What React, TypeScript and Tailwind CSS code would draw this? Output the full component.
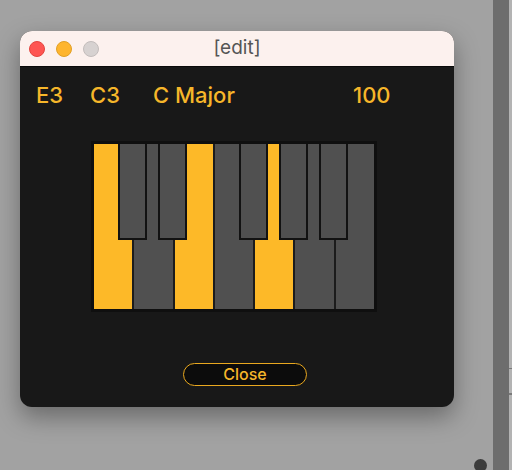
const YELLOW = 'bg-[#fdb928]';

const whiteKeys = [true, false, true, false, true, false, false];
const blackKeyLefts = [24, 64, 145, 185, 225];

function Keyboard() {
  return (
    <div className="relative w-[286px] h-[171px] border-[3px] border-[#0f0f0f] bg-[#1c1c1c]">
      <div className="flex h-full gap-[2px]">
        {whiteKeys.map((on, i) => (
          <div key={i} className={on ? `flex-1 ${YELLOW}` : 'flex-1 bg-[#505050]'} />
        ))}
      </div>
      {blackKeyLefts.map((left) => (
        <div
          key={left}
          className="absolute top-0 w-[29px] h-[96px] bg-[#505050] border-2 border-t-0 border-[#121212]"
          style={{ left }}
        />
      ))}
    </div>
  );
}

function TrafficLights() {
  return (
    <div className="flex items-center gap-[11px]">
      <span className="w-4 h-4 rounded-full bg-[#fe5552] border border-[#e2453f]" />
      <span className="w-4 h-4 rounded-full bg-[#feb52e] border border-[#e19f25]" />
      <span className="w-4 h-4 rounded-full bg-[#d7d2d1] border border-[#c2bcbb]" />
    </div>
  );
}

export default function App() {
  return (
    <div
      className="relative w-[512px] h-[470px] overflow-hidden flex bg-[#a2a2a2]"
      style={{ fontFamily: 'Inter, "Liberation Sans", sans-serif' }}
    >
      <div className="w-[493px] pt-[31px] pl-[20px]">
        <div className="w-[434px] h-[376px] rounded-[12px] overflow-hidden flex flex-col bg-[#181818] shadow-[0_10px_24px_rgba(0,0,0,0.35)]">
          <div className="relative h-[36px] shrink-0 bg-[#fcf1ee] flex items-center pl-[9px] border-b border-[#0a0a0a]">
            <TrafficLights />
            <span className="absolute left-0 right-0 text-center text-[19px] text-[#555] pointer-events-none">
              [edit]
            </span>
          </div>
          <div className="flex items-center pt-[16px] pl-[16px] text-[22px] leading-6 font-medium text-[#f6b62a]">
            <span className="w-[54px]">E3</span>
            <span className="w-[63px]">C3</span>
            <span className="w-[200px]">C Major</span>
            <span>100</span>
          </div>
          <div className="pt-[34px] pl-[71px]">
            <Keyboard />
          </div>
          <div className="pt-[51px] pl-[163px]">
            <button
              type="button"
              className="w-[124px] h-[23px] rounded-full border-[1.5px] border-[#e9a81f] bg-[#0c0c0c] text-[16px] font-medium leading-none text-[#f6b62a] flex items-center justify-center pb-[1px]"
            >
              Close
            </button>
          </div>
        </div>
      </div>
      <div className="w-[16px] h-full bg-[#6d6d6d]" />
      <div className="flex-1 h-full bg-[#b3b3b3] flex flex-col">
        <div className="h-[368px]" />
        <div className="h-[1px] bg-[#7a7a7a]" />
        <div className="h-[24px]" />
        <div className="h-[2px] bg-[#7a7a7a]" />
      </div>
      <span className="absolute left-[474px] top-[459px] w-[13px] h-[13px] rounded-full bg-[#3c3c3c]" />
    </div>
  );
}
